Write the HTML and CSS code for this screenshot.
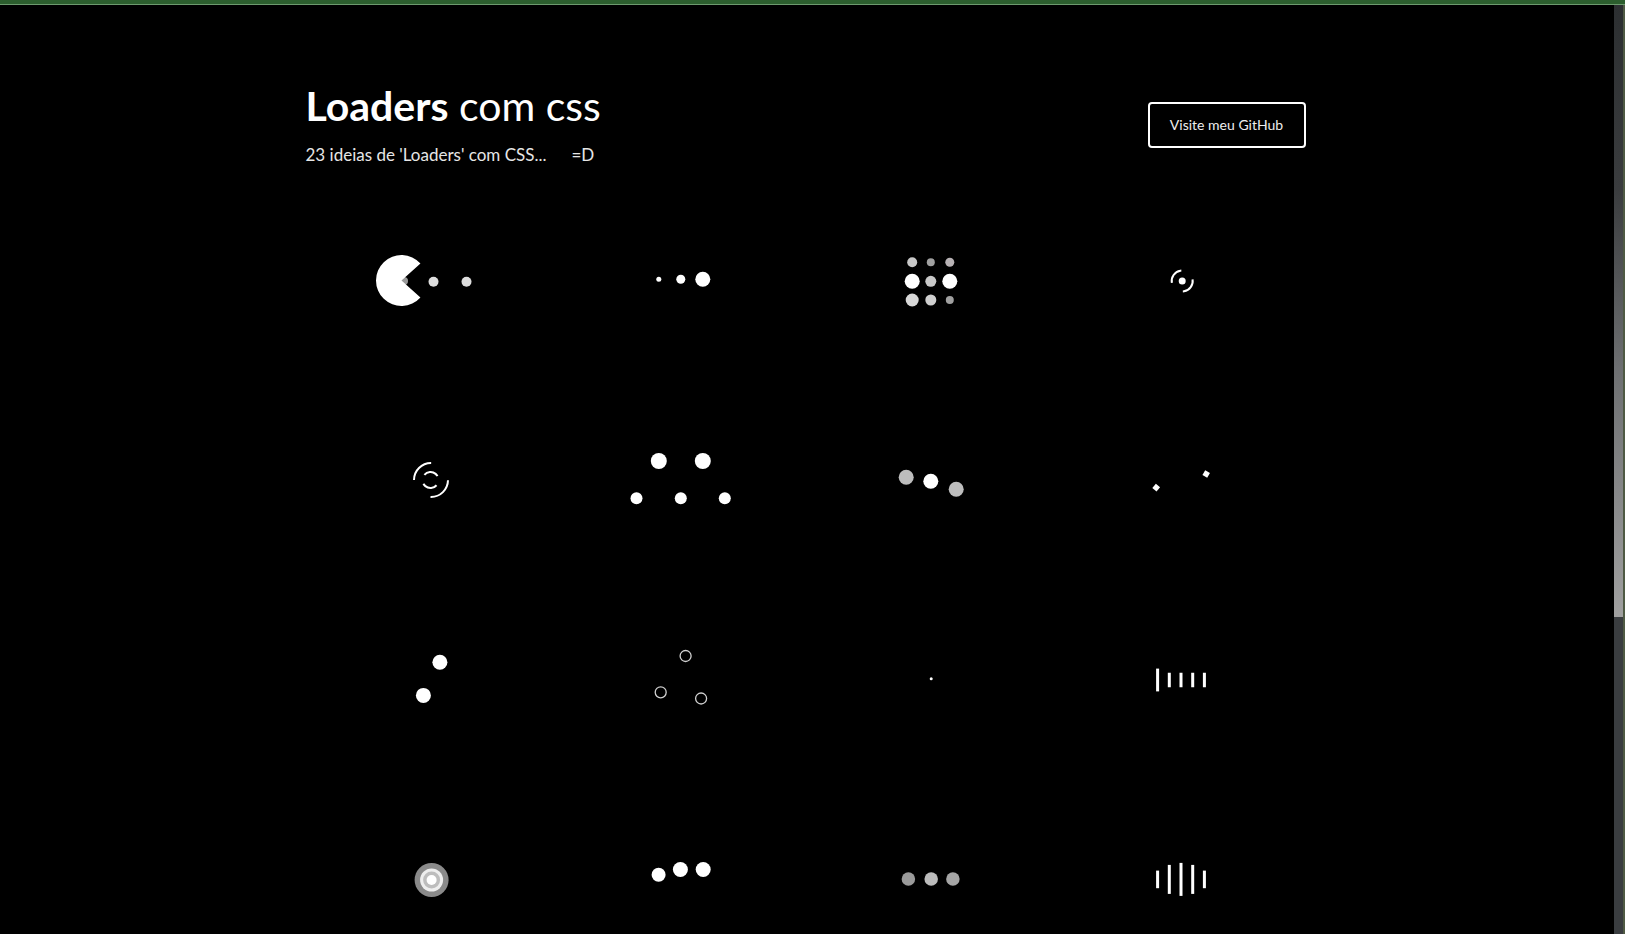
FILE: index.html
```html
<!DOCTYPE html>
<html lang="pt-BR">
<head>
<meta charset="utf-8">
<title>Loaders com css</title>
<link rel="stylesheet" href="styles.css">
</head>
<body>
<div class="topbar"></div>
<div class="window">
<div class="page">
  <div class="container">
    <header class="header">
      <div class="intro">
        <h1 class="title"><strong>Loaders</strong> com css</h1>
        <p class="subtitle">23 ideias de 'Loaders' com CSS...<span class="smile">=D</span></p>
      </div>
      <a class="github" href="#">Visite meu GitHub</a>
    </header>
    <main class="grid">
      <div class="cell">
        <svg class="loader" viewBox="-60 -50 120 100">
          <circle cx="-27" cy="0" r="4" fill="#9a9a9a"/>
          <path d="M-29.5 -0.5 L-10.55 -17.56 A25.5 25.5 0 1 0 -10.55 16.56 Z" fill="#fff"/>
          <circle cx="2.5" cy="0.7" r="5" fill="#ddd"/>
          <circle cx="35.5" cy="0.7" r="5" fill="#ddd"/>
        </svg>
      </div>
      <div class="cell">
        <svg class="loader" viewBox="-60 -50 120 100">
          <circle cx="-22.2" cy="-1.7" r="2.5" fill="#fff"/>
          <circle cx="-0.2" cy="-1.7" r="4.5" fill="#fff"/>
          <circle cx="21.8" cy="-1.7" r="7.5" fill="#fff"/>
        </svg>
      </div>
      <div class="cell">
        <svg class="loader" viewBox="-60 -50 120 100">
          <circle cx="-18.8" cy="-18.7" r="5" fill="#c8c8c8"/>
          <circle cx="-0.2" cy="-18.7" r="4" fill="#a0a0a0"/>
          <circle cx="18.8" cy="-18.7" r="4.5" fill="#b8b2b5"/>
          <circle cx="-18.8" cy="0.3" r="7.5" fill="#fff"/>
          <circle cx="-0.2" cy="0.3" r="5.5" fill="#c8c8c8"/>
          <circle cx="18.8" cy="0.3" r="7.5" fill="#fff"/>
          <circle cx="-18.8" cy="19" r="6.5" fill="#d8d8d8"/>
          <circle cx="-0.2" cy="19" r="5.5" fill="#cfcfcf"/>
          <circle cx="18.8" cy="19" r="4" fill="#a0a0a0"/>
        </svg>
      </div>
      <div class="cell">
        <svg class="loader" viewBox="-60 -50 120 100">
          <circle cx="1.2" cy="0" r="10.5" fill="none" stroke="#fff" stroke-width="2" stroke-dasharray="17.4 15.6" transform="rotate(170 1.2 0)"/>
          <circle cx="1.2" cy="0" r="3.5" fill="#fff"/>
        </svg>
      </div>

      <div class="cell">
        <svg class="loader" viewBox="-60 -50 120 100">
          <circle cx="0" cy="-1" r="17" fill="none" stroke="#fff" stroke-width="2" stroke-dasharray="26.7 26.7" transform="rotate(180 0 -1)"/>
          <circle cx="-0.5" cy="-1" r="8" fill="none" stroke="#fff" stroke-width="2" stroke-dasharray="15.4 9.7" transform="rotate(220 -0.5 -1)"/>
        </svg>
      </div>
      <div class="cell">
        <svg class="loader" viewBox="-60 -50 120 100">
          <circle cx="-22.2" cy="-20" r="8" fill="#fff"/>
          <circle cx="21.8" cy="-20" r="8" fill="#fff"/>
          <circle cx="-44.5" cy="17.3" r="6" fill="#fff"/>
          <circle cx="-0.2" cy="17.3" r="6" fill="#fff"/>
          <circle cx="43.8" cy="17.3" r="6" fill="#fff"/>
        </svg>
      </div>
      <div class="cell">
        <svg class="loader" viewBox="-60 -50 120 100">
          <circle cx="-24.8" cy="-3.7" r="7.5" fill="#bdbdbd"/>
          <circle cx="-0.2" cy="0.3" r="7.5" fill="#fff"/>
          <circle cx="25.2" cy="8.3" r="7.5" fill="#bdbdbd"/>
        </svg>
      </div>
      <div class="cell">
        <svg class="loader" viewBox="-60 -50 120 100">
          <rect x="-2.75" y="-2.75" width="5.5" height="5.5" fill="#fff" transform="translate(-24.8 6.7) rotate(40)"/>
          <rect x="-2.75" y="-2.75" width="5.5" height="5.5" fill="#fff" transform="translate(25.2 -7) rotate(30)"/>
        </svg>
      </div>

      <div class="cell">
        <svg class="loader" viewBox="-60 -50 120 100">
          <circle cx="8.9" cy="-18.7" r="7.5" fill="#fff"/>
          <circle cx="-7.6" cy="14.4" r="7.5" fill="#fff"/>
        </svg>
      </div>
      <div class="cell">
        <svg class="loader" viewBox="-60 -50 120 100">
          <circle cx="4.6" cy="-25" r="5.5" fill="none" stroke="#d0d0d0" stroke-width="1.3"/>
          <circle cx="-20.3" cy="11.3" r="5.5" fill="none" stroke="#d0d0d0" stroke-width="1.3"/>
          <circle cx="20.1" cy="17.5" r="5.5" fill="none" stroke="#d0d0d0" stroke-width="1.3"/>
        </svg>
      </div>
      <div class="cell">
        <svg class="loader" viewBox="-60 -50 120 100">
          <circle cx="0.2" cy="-2.2" r="1.5" fill="#fff"/>
        </svg>
      </div>
      <div class="cell">
        <svg class="loader" viewBox="-60 -50 120 100">
          <rect x="-24.9" y="-12.4" width="3" height="22.8" fill="#fff"/>
          <rect x="-13.2" y="-8.25" width="3" height="14.5" fill="#fff"/>
          <rect x="-1.5" y="-8.25" width="3" height="14.5" fill="#fff"/>
          <rect x="10.2" y="-8.25" width="3" height="14.5" fill="#fff"/>
          <rect x="21.9" y="-8.25" width="3" height="14.5" fill="#fff"/>
        </svg>
      </div>

      <div class="cell">
        <svg class="loader" viewBox="-60 -50 120 100">
          <circle cx="0.6" cy="-1" r="17" fill="#8a8a8a"/>
          <circle cx="0.6" cy="-1" r="11.5" fill="#eeeeee"/>
          <circle cx="0.6" cy="-1" r="8.5" fill="#bdbdbd"/>
          <circle cx="0.6" cy="-1" r="5" fill="#fff"/>
        </svg>
      </div>
      <div class="cell">
        <svg class="loader" viewBox="-60 -50 120 100">
          <circle cx="-22.4" cy="-6.3" r="7" fill="#fff"/>
          <circle cx="-0.6" cy="-11.5" r="7.5" fill="#fff"/>
          <circle cx="22.2" cy="-11.5" r="7.5" fill="#fff"/>
        </svg>
      </div>
      <div class="cell">
        <svg class="loader" viewBox="-60 -50 120 100">
          <circle cx="-22.6" cy="-2.1" r="6.75" fill="#9a9a9a"/>
          <circle cx="0.2" cy="-2.1" r="6.75" fill="#bbbbbb"/>
          <circle cx="21.9" cy="-2.1" r="6.75" fill="#a5a5a5"/>
        </svg>
      </div>
      <div class="cell">
        <svg class="loader" viewBox="-60 -50 120 100">
          <rect x="-24.9" y="-10.4" width="3" height="17.6" fill="#fff"/>
          <rect x="-13.2" y="-16.1" width="3" height="29" fill="#fff"/>
          <rect x="-1.5" y="-18.1" width="3" height="33" fill="#fff"/>
          <rect x="10.2" y="-16.1" width="3" height="29" fill="#fff"/>
          <rect x="21.9" y="-10.4" width="3" height="17.6" fill="#fff"/>
        </svg>
      </div>

      <div class="cell">
        <svg class="loader" viewBox="-60 -50 120 100">
          <circle cx="-15" cy="0" r="6" fill="#fff"/>
          <circle cx="15" cy="0" r="6" fill="#888"/>
        </svg>
      </div>
      <div class="cell">
        <svg class="loader" viewBox="-60 -50 120 100">
          <circle cx="0" cy="0" r="14" fill="none" stroke="#fff" stroke-width="2" stroke-dasharray="22 66"/>
        </svg>
      </div>
      <div class="cell">
        <svg class="loader" viewBox="-60 -50 120 100">
          <rect x="-6" y="-6" width="12" height="12" fill="#fff"/>
        </svg>
      </div>
      <div class="cell">
        <svg class="loader" viewBox="-60 -50 120 100">
          <circle cx="-20" cy="0" r="5" fill="#fff"/>
          <circle cx="0" cy="0" r="5" fill="#fff"/>
          <circle cx="20" cy="0" r="5" fill="#fff"/>
        </svg>
      </div>
      <div class="cell">
        <svg class="loader" viewBox="-60 -50 120 100">
          <circle cx="0" cy="0" r="12" fill="#fff"/>
        </svg>
      </div>
      <div class="cell">
        <svg class="loader" viewBox="-60 -50 120 100">
          <circle cx="0" cy="0" r="16" fill="none" stroke="#ccc" stroke-width="2"/>
        </svg>
      </div>
      <div class="cell">
        <svg class="loader" viewBox="-60 -50 120 100">
          <rect x="-12" y="-3" width="24" height="6" fill="#fff"/>
        </svg>
      </div>
    </main>
  </div>
</div>
<div class="scrollbar" aria-hidden="true"><div class="thumb"></div></div>
</div>
</body>
</html>
```

FILE: styles.css
```css
html,
body {
  margin: 0;
  height: 100%;
  background: #000;
  overflow: hidden;
}

body {
  display: flex;
  flex-direction: column;
  font-family: Lato, "Liberation Sans", sans-serif;
  color: #fff;
}

.topbar {
  flex: none;
  height: 4px;
  background: #2c5e2e;
  border-bottom: 1px solid #6d9a6e;
}

.window {
  flex: 1;
  min-height: 0;
  display: flex;
}

.page {
  flex: 1;
  min-width: 0;
  overflow: hidden;
}

.scrollbar {
  flex: none;
  width: 9px;
  border-left: 3px solid #000;
  border-right: 2px solid #4f5a44;
  background: #3a3d40;
  display: flex;
  flex-direction: column;
}

.thumb {
  flex: none;
  height: 612px;
  background: linear-gradient(#2c2f31 0%, #3a3c3e 30%, #6e7072 60%, #a0a0a0 100%);
}

.container {
  width: 1000px;
  margin: 0 auto;
  padding-bottom: 34px;
}

.header {
  display: flex;
  justify-content: space-between;
  align-items: flex-start;
  padding-top: 77.4px;
}

.title {
  margin: 0;
  font-size: 41px;
  line-height: 48px;
  font-weight: 400;
  color: #fff;
}

.title strong {
  font-weight: 700;
}

.subtitle {
  margin: 15px 0 0;
  font-size: 17px;
  line-height: 20px;
  color: #e6e6e6;
}

.smile {
  margin-left: 25px;
}

.github {
  margin-top: 19.6px;
  width: 158px;
  height: 46px;
  box-sizing: border-box;
  border: 2px solid #fff;
  border-radius: 4px;
  display: flex;
  align-items: center;
  justify-content: center;
  color: #eee;
  font-size: 14px;
  text-decoration: none;
}

.grid {
  display: grid;
  grid-template-columns: repeat(4, 1fr);
  grid-auto-rows: 200px;
  margin-top: 15.6px;
}

.cell {
  display: flex;
  align-items: center;
  justify-content: center;
}

.loader {
  display: block;
  width: 120px;
  height: 100px;
}
```
